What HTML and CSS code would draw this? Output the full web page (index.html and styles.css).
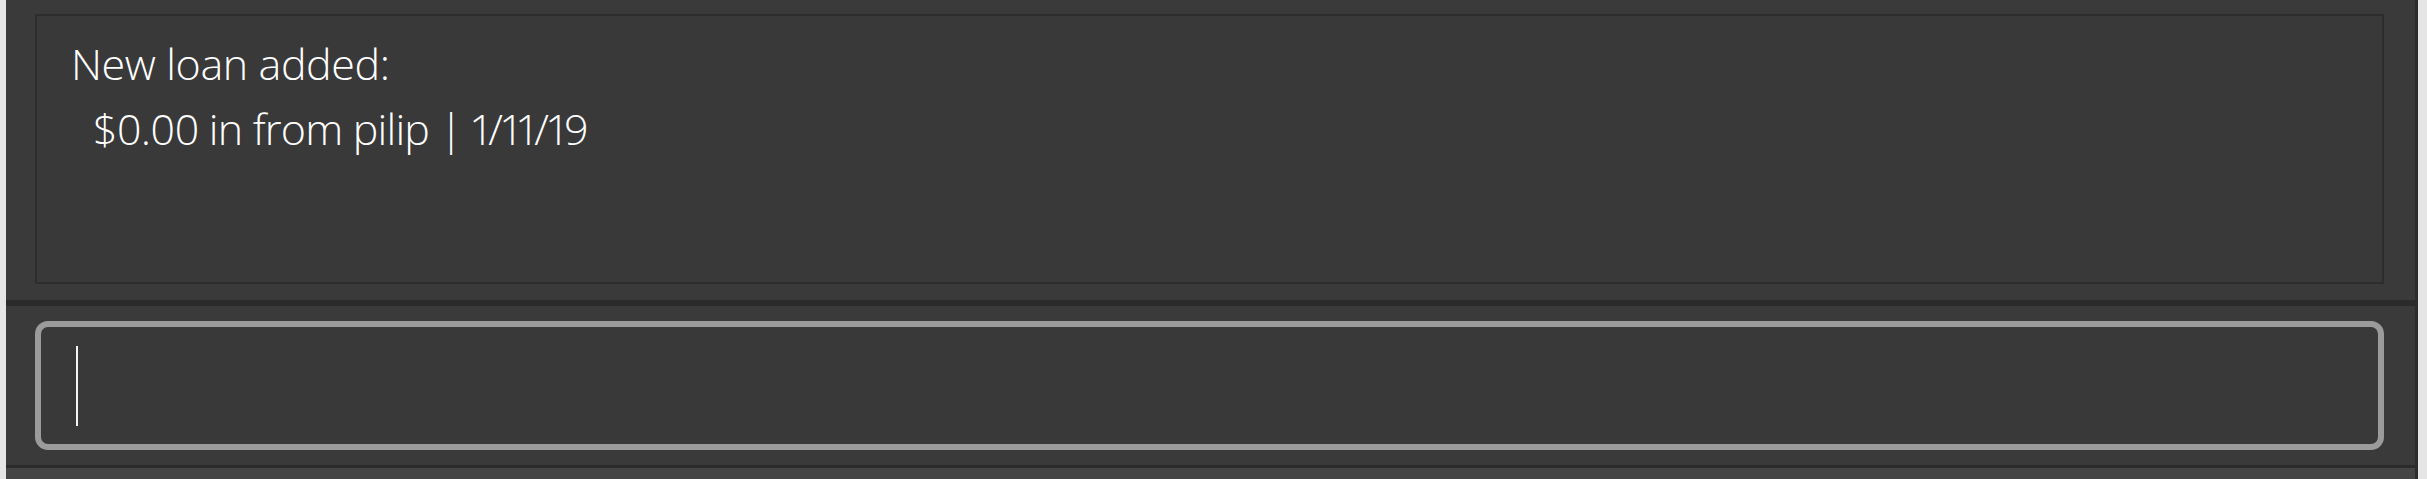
FILE: index.html
```html
<!DOCTYPE html>
<html>
<head>
<meta charset="utf-8">
<link rel="stylesheet" href="styles.css">
</head>
<body>
<div class="app">
  <div class="result-pane">
    <div class="result-box">
      <div class="line">New loan added:</div>
      <div class="line indent">$0.00 in from pilip | 1/11/19</div>
    </div>
  </div>
  <div class="separator"></div>
  <div class="command-pane">
    <div class="command-box">
      <span class="caret"></span>
    </div>
  </div>
  <div class="status-bar"></div>
</div>
</body>
</html>
```
FILE: styles.css
```css
html, body {
  margin: 0;
  padding: 0;
}
body {
  width: 2427px;
  height: 479px;
  overflow: hidden;
  background: #e5e5e5;
}
.app {
  margin-left: 6px;
  width: 2409px;
  height: 479px;
  background: #3a3a3a;
  border-right: 3px solid #2c2c2c;
  display: flex;
  flex-direction: column;
}
.result-pane {
  height: 300px;
  box-sizing: border-box;
  padding: 14px 31px 16px 29px;
}
.result-box {
  height: 270px;
  box-sizing: border-box;
  border: 2px solid #2d2d2d;
  background: #393939;
  padding: 15px 0 0 34px;
  font-family: "Open Sans", "Noto Sans", sans-serif;
  font-weight: 300;
  font-size: 43px;
  letter-spacing: -0.4px;
  line-height: 65px;
  font-variant-numeric: proportional-nums;
  color: #ffffff;
}
.line {
  white-space: pre;
}
.indent {
  padding-left: 22px;
  letter-spacing: -0.8px;
}
.separator {
  height: 6px;
  background: #2b2b2b;
}
.command-pane {
  height: 159px;
  box-sizing: border-box;
  padding: 15px 31px 15px 29px;
}
.command-box {
  height: 129px;
  box-sizing: border-box;
  border: 6px solid #9b9b9b;
  border-radius: 13px;
  background: #393939;
  display: flex;
  align-items: center;
  padding-left: 35px;
}
.caret {
  display: block;
  width: 2px;
  height: 80px;
  background: #f4f4f4;
}
.status-bar {
  flex: 1;
  border-top: 3px solid #2b2b2b;
  background: #454545;
}
```
